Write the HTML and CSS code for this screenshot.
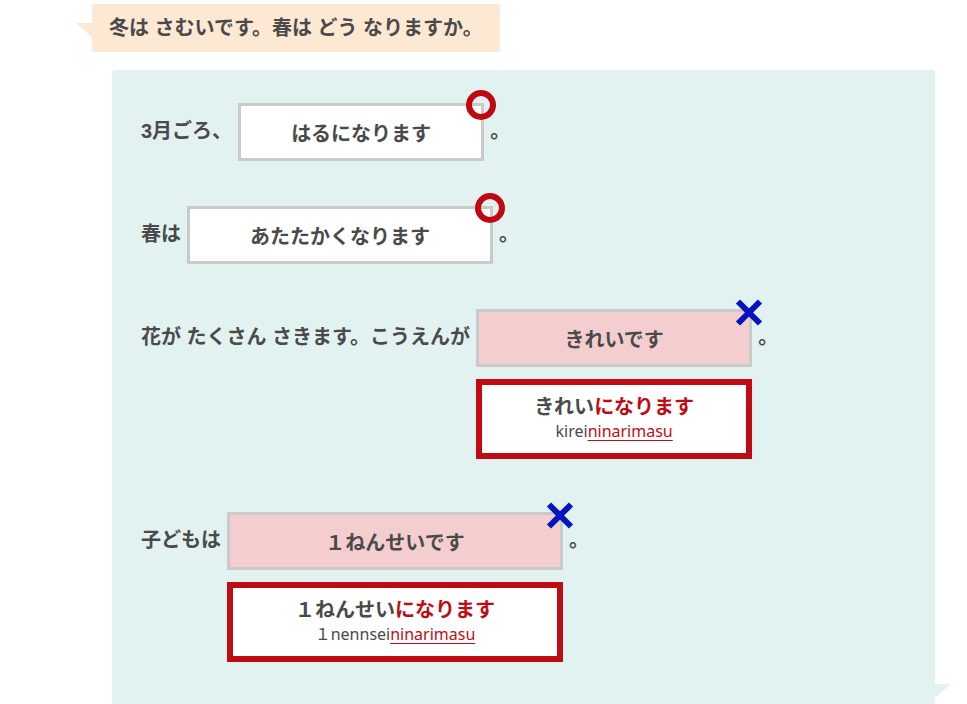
FILE: index.html
```
<!DOCTYPE html>
<html lang="ja">
<head>
<meta charset="utf-8">
<title>冬は さむいです。春は どう なりますか。</title>
<link rel="stylesheet" href="styles.css">
</head>
<body>
<main class="dialog">
  <p class="question">冬は さむいです。春は どう なりますか。
    <svg class="tail tail-left" viewBox="0 0 16 14" aria-hidden="true"><path d="M0 0H16V14Z"/></svg>
  </p>
  <form class="panel">
    <div class="row">
      <label for="a1">3月ごろ、</label>
      <div class="field w-s">
        <input id="a1" type="text" value="はるになります">
        <svg class="mark good" viewBox="0 0 30 30" aria-hidden="true"><circle cx="15" cy="15" r="12"/></svg>
      </div>
      <span>。</span>
    </div>
    <div class="row">
      <label for="a2">春は</label>
      <div class="field w-l">
        <input id="a2" type="text" value="あたたかくなります">
        <svg class="mark good" viewBox="0 0 30 30" aria-hidden="true"><circle cx="15" cy="15" r="12"/></svg>
      </div>
      <span>。</span>
    </div>
    <div class="row">
      <label for="a3">花が たくさん さきます。こうえんが</label>
      <div class="field w-m">
        <input id="a3" class="wrong" type="text" value="きれいです">
        <svg class="mark bad" viewBox="0 0 30 30" aria-hidden="true"><path d="M4 5.500L26 27.500M26 5.500L4 27.500"/></svg>
        <div class="answer">
          <p class="kana">きれい<em>になります</em></p>
          <p class="romaji">kirei<em>ninarimasu</em></p>
        </div>
      </div>
      <span>。</span>
    </div>
    <div class="row">
      <label for="a4">子どもは</label>
      <div class="field w-xl">
        <input id="a4" class="wrong" type="text" value="１ねんせいです">
        <svg class="mark bad" viewBox="0 0 30 30" aria-hidden="true"><path d="M4 5.500L26 27.500M26 5.500L4 27.500"/></svg>
        <div class="answer">
          <p class="kana">１ねんせい<em>になります</em></p>
          <p class="romaji">１nennsei<em>ninarimasu</em></p>
        </div>
      </div>
      <span>。</span>
    </div>
    <svg class="tail tail-right" viewBox="0 0 16 14" aria-hidden="true"><path d="M0 0H16L0 14Z"/></svg>
  </form>
</main>
</body>
</html>
```
FILE: styles.css
```
* {
  box-sizing: border-box;
}

body,
p {
  margin: 0;
}

body {
  background: #fff;
  color: #4a4a4a;
  font: bold 20px/24px "Liberation Sans", "Noto Sans CJK JP", sans-serif;
}

.dialog {
  display: flex;
  flex-direction: column;
  align-items: flex-start;
  gap: 18px;
  min-height: 100vh;
  padding: 4px 32px 0 92px;
}

.question {
  position: relative;
  padding: 12px 17px;
  border-radius: 3px;
  background: #fde8d3;
}

.panel {
  position: relative;
  flex: 1;
  align-self: stretch;
  display: flex;
  flex-direction: column;
  gap: 45px;
  margin-left: 20px;
  padding: 33px 29px 34px;
  border-radius: 3px 3px 0 0;
  background: #e2f2f0;
}

.tail {
  position: absolute;
  width: 16px;
  height: 14px;
}

.tail-left {
  top: 19px;
  right: 100%;
  fill: #fde8d3;
}

.tail-right {
  bottom: 6px;
  left: 100%;
  fill: #e2f2f0;
}

.row {
  display: flex;
  align-items: flex-start;
  gap: 6px;
  line-height: 56px;
  white-space: nowrap;
}

.field {
  position: relative;
  line-height: 24px;
}

.w-s { width: 246px; }
.w-m { width: 276px; }
.w-l { width: 306px; }
.w-xl { width: 336px; }

.field input {
  display: block;
  width: 100%;
  height: 58px;
  padding: 0;
  border: 3px solid #cacaca;
  border-radius: 0;
  background: #fff;
  color: inherit;
  font: inherit;
  text-align: center;
}

.field .wrong {
  background: #f4cecf;
}

.mark {
  position: absolute;
  top: -13px;
  right: -12px;
  width: 30px;
  height: 30px;
  fill: none;
  stroke-width: 6;
}

.good {
  stroke: #bf0811;
}

.bad {
  stroke: #0416bb;
}

.answer {
  margin: 12px 0 8px;
  padding: 10px 0;
  border: 6px solid #bf0c14;
  background: #fff;
  text-align: center;
}

.answer em {
  color: #bf0c14;
  font-style: normal;
}

.romaji {
  font: 16px/24px "Noto Sans", "Noto Sans CJK JP", sans-serif;
}

.romaji em {
  text-decoration: underline 1px;
  text-underline-offset: 3px;
  text-decoration-skip-ink: none;
}
```
